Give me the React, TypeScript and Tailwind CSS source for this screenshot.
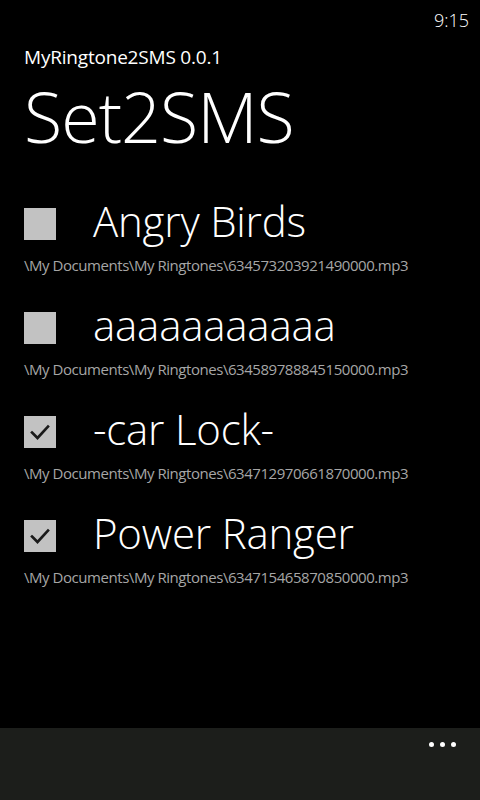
import React from "react";

type Tone = {
  name: string;
  path: string;
  checked: boolean;
};

const tones: Tone[] = [
  { name: "Angry Birds", path: "\\My Documents\\My Ringtones\\634573203921490000.mp3", checked: false },
  { name: "aaaaaaaaaaa", path: "\\My Documents\\My Ringtones\\634589788845150000.mp3", checked: false },
  { name: "-car Lock-", path: "\\My Documents\\My Ringtones\\634712970661870000.mp3", checked: true },
  { name: "Power Ranger", path: "\\My Documents\\My Ringtones\\634715465870850000.mp3", checked: true },
];

const CheckBox = ({ checked }: { checked: boolean }) => {
  return (
    <div className="w-[32px] h-[32px] bg-[#c2c2c2] flex items-center justify-center shrink-0">
      {checked && (
        <svg width="22" height="22" viewBox="0 0 22 22" fill="none">
          <path d="M3 11.5 L8.5 17 L19 5.5" stroke="#1a1a1a" strokeWidth="2.6" strokeLinecap="square" />
        </svg>
      )}
    </div>
  );
};

const ToneItem = ({ tone }: { tone: Tone }) => {
  return (
    <div className="flex flex-col h-[104px]">
      <div className="flex items-center h-[56px]">
        <div className="w-[93px] pl-6 pt-[6px] flex items-center shrink-0">
          <CheckBox checked={tone.checked} />
        </div>
        <span className="text-[42px] font-light leading-none tracking-[-0.2px]">{tone.name}</span>
      </div>
      <div className="pl-6 text-[15px] leading-none text-[#a6a6a6] tracking-[-0.45px] mt-[9px]">{tone.path}</div>
    </div>
  );
};

const App = () => {
  return (
    <div className="w-[480px] h-[800px] bg-black text-white flex flex-col" style={{ fontFamily: '"Open Sans", "Noto Sans", sans-serif' }}>
      <div className="h-[40px] flex items-center justify-end pr-[11px] pt-[1px]">
        <span className="text-[18px] font-light">9:15</span>
      </div>
      <div className="pl-6 mt-[8px]">
        <div className="text-[19px] leading-none tracking-[-0.2px]">MyRingtone2SMS 0.0.1</div>
        <div className="text-[70px] font-light leading-[84px] mt-[7px] tracking-[-1px]">Set2SMS</div>
      </div>
      <div className="flex flex-col mt-[35px]">
        {tones.map((tone) => (
          <ToneItem key={tone.path} tone={tone} />
        ))}
      </div>
      <div className="flex-1" />
      <div className="h-[72px] bg-[#1c1e1b] flex justify-end items-start pr-[24px] pt-[14px]">
        <div className="flex gap-[6px]">
          <span className="w-[5px] h-[5px] rounded-full bg-white" />
          <span className="w-[5px] h-[5px] rounded-full bg-white" />
          <span className="w-[5px] h-[5px] rounded-full bg-white" />
        </div>
      </div>
    </div>
  );
};

export default App;
